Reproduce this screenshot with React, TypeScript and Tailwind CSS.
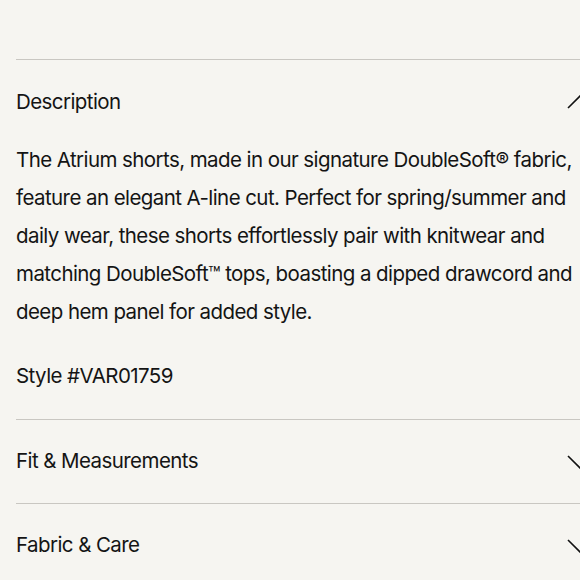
import React from "react";

const Chevron = ({ up }: { up?: boolean }) => (
  <svg width="26" height="14" viewBox="0 0 26 14" fill="none" className="shrink-0">
    <path
      d={up ? "M1 13 L13 1 L25 13" : "M1 1 L13 13 L25 1"}
      stroke="#111"
      strokeWidth="1.6"
    />
  </svg>
);

export default function App() {
  return (
    <div
      className="w-[580px] h-[580px] overflow-hidden bg-[#f6f5f1] text-[#141414] pl-4 pt-[59px]"
      style={{ fontFamily: "Inter, 'Liberation Sans', sans-serif" }}
    >
      <div className="w-[577px]">
        <section className="border-t border-[#c9c7c2]">
          <button className="w-full flex items-center justify-between h-[82px] pt-[2px] text-left">
            <span className="text-[20.5px] tracking-[-0.028em]">Description</span>
            <Chevron up />
          </button>
          <div className="-mt-[1px] pb-6 w-[564px] text-[20.5px] leading-[38px] tracking-[-0.028em]">
            <p>
              The Atrium shorts, made in our signature DoubleSoft® fabric, feature an elegant A-line cut.
              Perfect for spring/summer and daily wear, these shorts effortlessly pair with knitwear and
              matching DoubleSoft™ tops, boasting a dipped drawcord and deep hem panel for added style.
            </p>
            <p className="mt-[26px]">Style #VAR01759</p>
          </div>
        </section>
        <section className="border-t border-[#c9c7c2]">
          <button className="w-full flex items-center justify-between h-[83px] text-left">
            <span className="text-[20.5px] tracking-[-0.028em]">Fit &amp; Measurements</span>
            <Chevron />
          </button>
        </section>
        <section className="border-t border-[#c9c7c2]">
          <button className="w-full flex items-center justify-between h-[83px] text-left">
            <span className="text-[20.5px] tracking-[-0.028em]">Fabric &amp; Care</span>
            <Chevron />
          </button>
        </section>
      </div>
    </div>
  );
}
